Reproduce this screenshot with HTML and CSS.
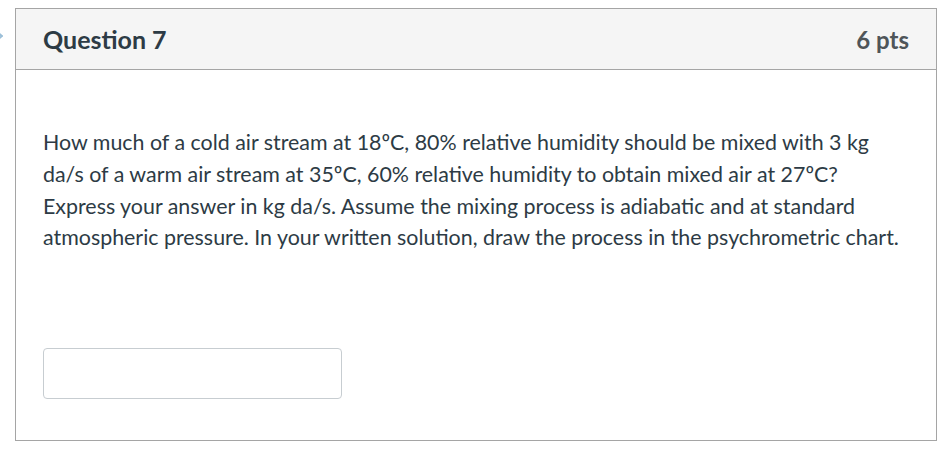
FILE: index.html
```html
<!DOCTYPE html>
<html>
<head>
<meta charset="utf-8">
<link rel="stylesheet" href="styles.css">
</head>
<body>
<div class="page">
  <div class="marker"></div>
  <div class="card">
    <div class="header">
      <span class="title">Question 7</span>
      <span class="pts">6 pts</span>
    </div>
    <div class="content">
      <p class="text">How much of a cold air stream at 18ºC, 80% relative humidity should be mixed with 3 kg da/s of a warm air stream at 35ºC, 60% relative humidity to obtain mixed air at 27ºC? Express your answer in kg da/s. Assume the mixing process is adiabatic and at standard atmospheric pressure. In your written solution, draw the process in the psychrometric chart.</p>
      <input class="answer" type="text">
    </div>
  </div>
</div>
</body>
</html>
```
FILE: styles.css
```css
html, body {
  margin: 0;
  padding: 0;
  background: #fff;
}
.page {
  padding: 8px 11px 0 15px;
  position: relative;
}
.marker {
  position: absolute;
  left: -9px;
  top: 31px;
  width: 8px;
  height: 8px;
  border-top: 2px solid #9bbfd8;
  border-right: 2px solid #9bbfd8;
  transform: rotate(45deg);
}
.card {
  border: 1px solid #a5a5a5;
  height: 433px;
  box-sizing: border-box;
  font-family: Lato, "Liberation Sans", sans-serif;
  color: #2d3b45;
}
.header {
  height: 61px;
  box-sizing: border-box;
  background: #f5f5f5;
  border-bottom: 1px solid #a5a5a5;
  display: flex;
  align-items: center;
  justify-content: space-between;
  padding: 0 27px 0 27px;
}
.title {
  font-size: 25px;
  font-weight: bold;
}
.pts {
  font-size: 24px;
  font-weight: bold;
  color: #4f5559;
}
.content {
  padding: 57px 27px 0 27px;
}
.text {
  margin: 0;
  font-size: 21.4px;
  line-height: 31.8px;
}
.answer {
  display: block;
  margin-top: 94px;
  width: 299px;
  height: 51px;
  box-sizing: border-box;
  border: 1px solid #c7cdd1;
  border-radius: 4px;
  background: #fff;
}
```
